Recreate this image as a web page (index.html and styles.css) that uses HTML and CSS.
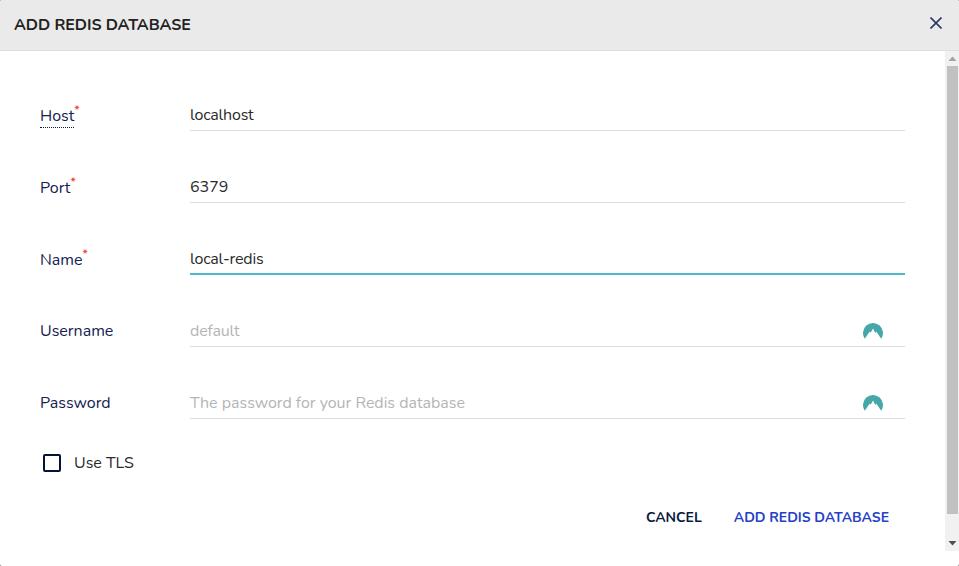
FILE: index.html
```html
<!DOCTYPE html>
<html lang="en">
<head>
<meta charset="utf-8">
<title>Add Redis Database</title>
<link rel="stylesheet" href="styles.css">
</head>
<body>
<div class="dialog">
  <header class="header">
    <h1 class="title">ADD REDIS DATABASE</h1>
    <svg class="close" width="12" height="12" viewBox="0 0 12 12"><path d="M.5.5 11.5 11.5M11.5.5.5 11.5"/></svg>
  </header>
  <div class="viewport">
    <main class="form">
      <div class="row"><div class="label"><span class="hint">Host</span><span class="star">*</span></div><div class="field"><span class="tight">localhost</span></div></div>
      <div class="row"><div class="label"><span>Port</span><span class="star">*</span></div><div class="field"><span>6379</span></div></div>
      <div class="row"><div class="label"><span>Name</span><span class="star">*</span></div><div class="field focused"><span class="tight">local-redis</span></div></div>
      <div class="row"><div class="label plain"><span>Username</span></div><div class="field empty"><span class="tight">default</span><svg class="vault" width="20" height="17" viewBox="0 0 20 17"><path d="M1.8 15.8A10 10 0 1 1 18.2 15.8L13.4 8.8 12.4 10 10 5.5 7.8 9.6 6.6 8.8Z"/></svg></div></div>
      <div class="row"><div class="label plain"><span>Password</span></div><div class="field empty"><span class="placeholder">The password for your Redis database</span><svg class="vault" width="20" height="17" viewBox="0 0 20 17"><path d="M1.8 15.8A10 10 0 1 1 18.2 15.8L13.4 8.8 12.4 10 10 5.5 7.8 9.6 6.6 8.8Z"/></svg></div></div>
      <div class="tls"><span class="checkbox"></span><span>Use TLS</span></div>
      <div class="actions"><span class="cancel">CANCEL</span><span class="submit">ADD REDIS DATABASE</span></div>
    </main>
    <div class="scrollbar">
      <svg width="14" height="15" viewBox="0 0 14 15"><path fill="#a3a3a3" d="M3.5 10 7.5 5.5 11.5 10Z"/></svg>
      <div class="thumb"></div>
      <svg class="down" width="14" height="15" viewBox="0 0 14 15"><path fill="#505050" d="M3.5 5 11.5 5 7.5 9.5Z"/></svg>
    </div>
  </div>
</div>
</body>
</html>
```
FILE: styles.css
```css
* { box-sizing: border-box; }
body { margin: 0; background: #7b7b7b; font: 16px/24px Nunito, Lato, "Open Sans", sans-serif; color: #2a2a2a; }
.dialog { width: 959px; height: 566px; background: #fff; border-radius: 2px; overflow: hidden; }
.header { height: 51px; background: #eaeaea; border-bottom: 1px solid #dedede; display: flex; align-items: center; justify-content: space-between; padding: 0 17px 0 14px; }
.title { margin: 0; font-size: 16px; font-weight: 700; letter-spacing: -.06px; white-space: nowrap; color: #222; }
.close { fill: none; stroke: #2c3763; stroke-width: 1.6; margin-top: -4px; }
.viewport { height: 500px; display: flex; }
.form { flex: 1; padding: 32px 40px 0; }
.row { height: 48px; margin-bottom: 24px; display: grid; grid-template-columns: 150px 1fr; }
.label { color: #15214f; padding-top: 21px; display: flex; align-items: flex-start; }
.label.plain { padding-top: 20px; }
.hint { height: 24px; border-bottom: 1px dotted #091a40; }
.star { color: #f0442e; font-size: 12px; font-weight: 600; line-height: 14px; margin-top: -1px; }
.field { display: flex; justify-content: space-between; border-bottom: 1px solid #dedede; padding: 20px 22px 0 0; }
.field.focused { border-bottom: 2px solid #4bbacd; }
.field.empty { color: #b5b5b5; }
.tight { letter-spacing: -.2px; }
.placeholder { letter-spacing: -.02px; }
.vault { fill: #46a7aa; margin-top: 4px; }
.tls { display: flex; align-items: center; gap: 13px; height: 24px; margin-top: 32px; padding-left: 3px; }
.checkbox { width: 18px; height: 18px; border: 2px solid #04123b; border-radius: 2px; }
.actions { display: flex; justify-content: flex-end; gap: 32px; margin: 31px 16px 0 0; font-size: 14px; font-weight: 700; letter-spacing: -.02px; white-space: nowrap; }
.cancel { color: #091a40; }
.submit { color: #253fc7; }
.scrollbar { width: 14px; background: #f1f1f1; display: flex; flex-direction: column; }
.thumb { width: 11px; height: 448px; margin-left: 2px; background: #c1c1c1; }
.down { margin-top: auto; }
```
